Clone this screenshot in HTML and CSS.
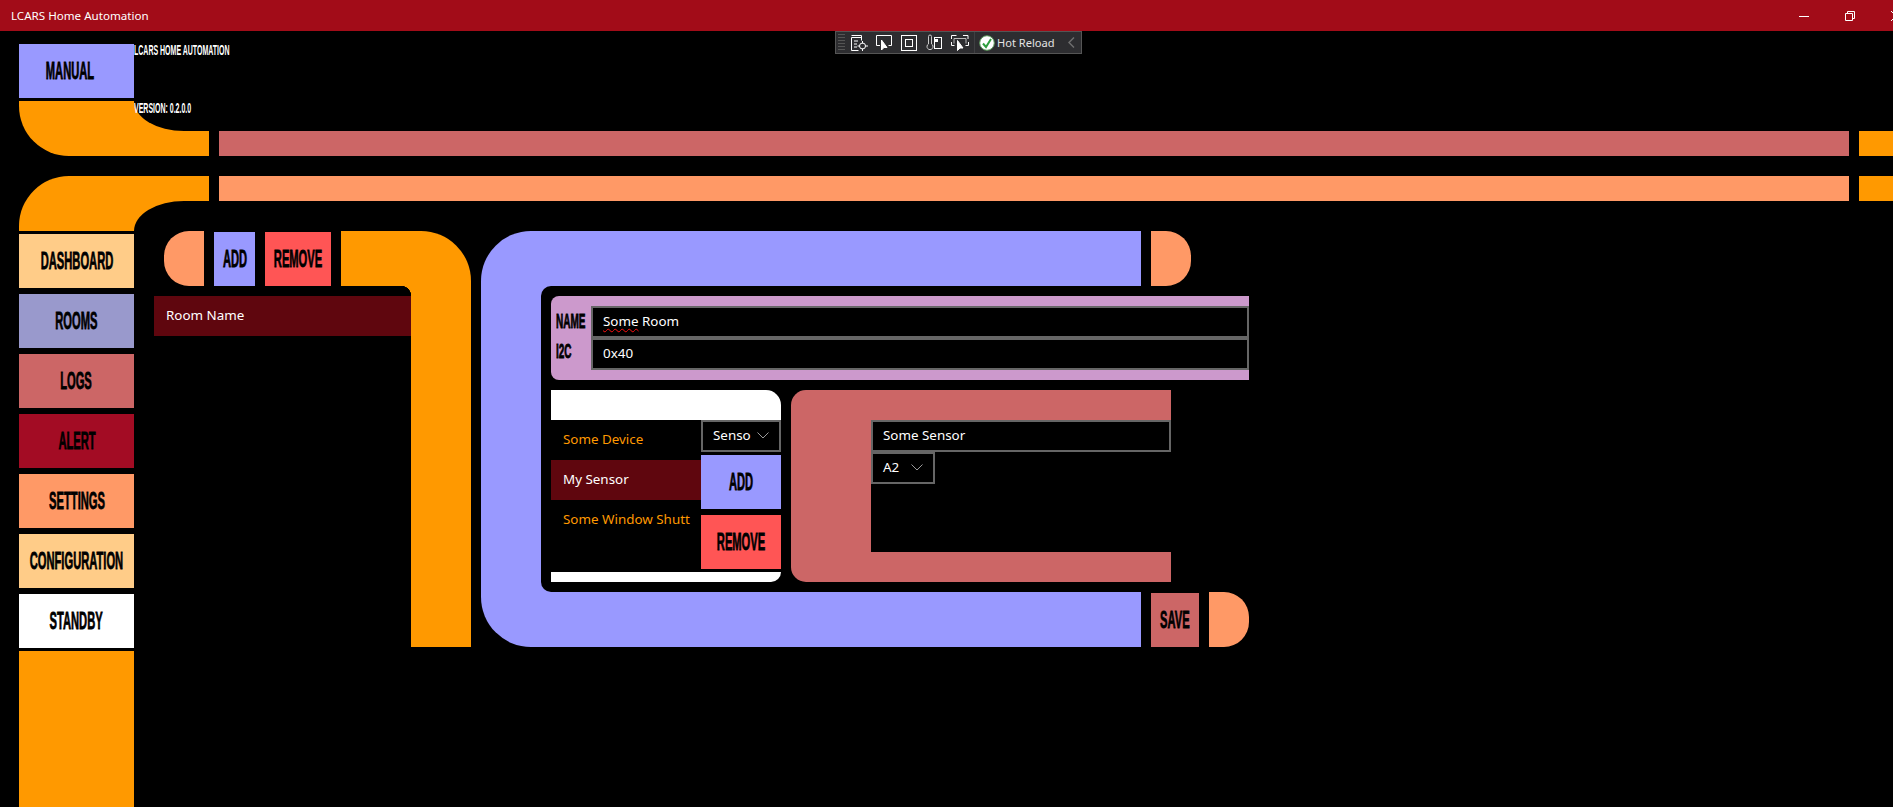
FILE: index.html
```html
<!DOCTYPE html>
<html lang="en">
<head>
  <meta charset="UTF-8" />
  <title>LCARS Home Automation</title>
  <link rel="stylesheet" href="styles.css">
</head>
<body>
  <div class="titlebar">
    <span class="app-title">LCARS Home Automation</span>
    <div class="win-controls">
      <svg width="10" height="10" viewBox="0 0 10 10"><path d="M0 5.5H10" stroke="#fff" fill="none"/></svg>
      <svg width="10" height="10" viewBox="0 0 10 10"><path d="M.5 2.5h7v7h-7zM2.5 2.5V.5h7v7h-2" stroke="#fff" fill="none"/></svg>
      <svg width="10" height="10" viewBox="0 0 10 10"><path d="M0 0L10 10M10 0L0 10" stroke="#fff" fill="none"/></svg>
    </div>
  </div>

  <div class="devbar">
    <div class="grip"></div>
    <svg class="dev-icon" width="17" height="18" viewBox="0 0 17 18" fill="none" stroke="#fff"><path d="M.5 1.5h10M.5 3.5h10"/><path d="M.5 3.5v13h7M10.5 1.5v5M3 7h4M3 10h3M3 13h3"/><circle cx="11.5" cy="12" r="3"/><path d="M11.5 7v2.500M11.500 14.500V17M6.500 12H8.500M14.500 12H17"/></svg>
    <svg class="dev-icon" width="17" height="18" viewBox="0 0 17 18" fill="none" stroke="#fff"><path d="M4 11.500H.5V1.500h15v10h-3"/><path d="M5.500 6v10l2.500-2.500 3 0z" fill="#fff"/></svg>
    <svg class="dev-icon" width="17" height="18" viewBox="0 0 17 18" fill="none" stroke="#fff"><rect x=".5" y="1.500" width="15" height="15"/><rect x="4.500" y="5.500" width="7" height="7"/></svg>
    <svg class="dev-icon" width="17" height="18" viewBox="0 0 17 18" fill="none" stroke="#fff"><path d="M2.500 10V2.500a1.500 1.500 0 0 1 3 0V10a3 3 0 1 1-3 0z" stroke="#ccc"/><rect x="8.500" y="3.500" width="7" height="11"/><rect x="9" y="5" width="3" height="3" fill="#fff" stroke="none"/></svg>
    <svg class="dev-icon" width="18" height="18" viewBox="0 0 18 18" fill="none" stroke="#fff"><path d="M.5 5V1.500h5M12 1.500h5V5M.5 8v3.500h3M17.500 8v3.500h-3"/><path d="M3 4.500h12v5M3 4.500v5" stroke="#bbb"/><path d="M6.500 6.500v10l2.500-2.500 3 0z" fill="#fff"/></svg>
    <div class="dev-sep"></div>
    <svg class="dev-check" width="16" height="16" viewBox="0 0 16 16"><circle cx="8" cy="8" r="7.300" fill="#fff" stroke="#5a9a5a"/><path d="M4 8.500l3 3.500 5-8" fill="none" stroke="#2e9e3e" stroke-width="2"/></svg>
    <span class="dev-label">Hot Reload</span>
    <svg class="dev-chev" width="7" height="11" viewBox="0 0 7 11"><path d="M6 .5L1 5.500l5 5" fill="none" stroke="#6e6e6e" stroke-width="1.500"/></svg>
  </div>

  <div class="frame">
    <div class="top">
      <button class="btn btn-lav btn-manual"><span class="cond">MANUAL</span></button>
      <div class="intro">
        <span class="tiny">LCARS HOME AUTOMATION</span>
        <span class="tiny">VERSION: 0.2.0.0</span>
      </div>
    </div>

    <div class="band band-one">
      <div class="elbow elbow-down"></div>
      <div class="bar bar-red"></div>
      <div class="bar bar-end"></div>
    </div>
    <div class="band band-two">
      <div class="elbow elbow-up"></div>
      <div class="bar bar-peach"></div>
      <div class="bar bar-end"></div>
    </div>

    <div class="main">
      <nav class="sidebar">
        <button class="btn btn-sand"><span class="cond">DASHBOARD</span></button>
        <button class="btn btn-slate"><span class="cond">ROOMS</span></button>
        <button class="btn btn-red"><span class="cond">LOGS</span></button>
        <button class="btn btn-alert"><span class="cond">ALERT</span></button>
        <button class="btn btn-peach"><span class="cond">SETTINGS</span></button>
        <button class="btn btn-sand"><span class="cond">CONFIGURATION</span></button>
        <button class="btn btn-white"><span class="cond">STANDBY</span></button>
        <div class="side-fill"></div>
      </nav>

      <section class="rooms">
        <div class="rooms-col">
          <div class="rooms-head">
            <div class="pill pill-left"></div>
            <button class="btn btn-lav btn-add-room"><span class="cond">ADD</span></button>
            <button class="btn btn-rem btn-rem-room"><span class="cond">REMOVE</span></button>
            <div class="arm-top"></div>
          </div>
          <div class="room-row">Room Name</div>
        </div>
        <div class="arm"></div>
      </section>

      <section class="editor">
        <div class="editor-top">
          <div class="lav-bar lav-top"></div>
          <div class="pill pill-right"></div>
        </div>
        <div class="editor-mid">
          <div class="editor-body">
            <div class="name-box">
              <div class="name-labels">
                <span class="label"><span class="cond cond-left">NAME</span></span>
                <span class="label"><span class="cond cond-left">I2C</span></span>
              </div>
              <div class="name-fields">
                <div class="field"><span class="typo">Some</span>&nbsp;Room</div>
                <div class="field">0x40</div>
              </div>
            </div>
            <div class="lower">
              <div class="devices">
                <div class="dev-cap dev-cap-top"></div>
                <div class="dev-mid">
                  <ul class="dev-list">
                    <li>Some Device</li>
                    <li class="active">My Sensor</li>
                    <li>Some Window Shutt</li>
                  </ul>
                  <div class="dev-actions">
                    <div class="field select"><span>Senso</span>
                      <svg width="12" height="7" viewBox="0 0 12 7"><path d="M.5 .5L6 6 11.500 .5" fill="none" stroke="#9a9a9a"/></svg>
                    </div>
                    <button class="btn btn-lav"><span class="cond">ADD</span></button>
                    <button class="btn btn-rem"><span class="cond">REMOVE</span></button>
                  </div>
                </div>
                <div class="dev-cap dev-cap-bottom"></div>
              </div>
              <div class="sensor">
                <div class="sensor-body">
                  <div class="field">Some Sensor</div>
                  <div class="field select select-small"><span>A2</span>
                    <svg width="12" height="7" viewBox="0 0 12 7"><path d="M.5 .5L6 6 11.500 .5" fill="none" stroke="#9a9a9a"/></svg>
                  </div>
                </div>
              </div>
            </div>
          </div>
        </div>
        <div class="editor-bottom">
          <div class="lav-bar lav-bottom"></div>
          <button class="btn btn-red btn-save"><span class="cond">SAVE</span></button>
          <div class="pill pill-right"></div>
        </div>
      </section>
    </div>
  </div>
</body>
</html>
```

FILE: styles.css
```css
* {
  box-sizing: border-box;
}

body {
  margin: 0;
  height: 807px;
  overflow: hidden;
  background: #000;
  color: #fff;
  font-family: "Noto Sans", "Open Sans", sans-serif;
  font-size: 13.4px;
  position: relative;
}

/* window chrome */
.titlebar {
  height: 31px;
  background: #a20c18;
  display: flex;
  align-items: center;
  padding-left: 11px;
  overflow: hidden;
}

.app-title {
  font-size: 11.6px;
  padding-bottom: 1px;
}

.win-controls {
  margin-left: auto;
  margin-right: -8px;
  display: flex;
  gap: 36px;
}

.devbar {
  position: absolute;
  top: 31px;
  left: 835px;
  width: 247px;
  height: 23px;
  background: #2d2d30;
  border: 1px solid #555;
  display: flex;
  align-items: center;
  z-index: 5;
}

.grip {
  width: 7px;
  height: 17px;
  margin-left: 2px;
  background: repeating-linear-gradient(to bottom, #555 0 1px, transparent 1px 3px);
}

.dev-icon {
  margin-left: 8px;
  flex: none;
}

.dev-icon:first-of-type {
  margin-left: 6px;
}

.dev-sep {
  width: 1px;
  height: 21px;
  background: #3f3f42;
  margin: 0 4px 0 5px;
}

.dev-label {
  margin-left: 2px;
  font-size: 11.1px;
  color: #e4e4e4;
}

.dev-chev {
  margin-left: 13px;
}

/* lcars frame */
.frame {
  padding: 13px 0 0 19px;
}

.top {
  position: relative;
  height: 54px;
  width: 115px;
}

.top .btn {
  width: 115px;
  height: 54px;
}

.top .btn-manual {
  padding-right: 13px;
}

.intro {
  position: absolute;
  top: 0;
  left: 115px;
  height: 71px;
  display: flex;
  flex-direction: column;
  justify-content: space-between;
  z-index: 2;
}

.tiny {
  display: block;
  font-family: "Liberation Sans", sans-serif;
  font-weight: bold;
  font-size: 14px;
  line-height: 13px;
  white-space: nowrap;
  transform: scaleX(0.5);
  transform-origin: left center;
}

.band {
  display: flex;
  gap: 10px;
  height: 55px;
}

.band-one {
  margin-top: 3px;
  align-items: flex-end;
}

.band-two {
  margin-top: 20px;
  align-items: flex-start;
}

.elbow {
  position: relative;
  width: 190px;
  height: 55px;
  background: #ff9900;
  flex: none;
}

.elbow::after {
  content: "";
  position: absolute;
  left: 115px;
  width: 75px;
  height: 30px;
  background: #000;
}

.elbow-down {
  border-bottom-left-radius: 50px;
}

.elbow-down::after {
  top: 0;
  border-bottom-left-radius: 50px 30px;
}

.elbow-up {
  border-top-left-radius: 50px;
}

.elbow-up::after {
  bottom: 0;
  border-top-left-radius: 50px 30px;
}

.bar {
  height: 25px;
}

.bar-red {
  width: 1630px;
  background: #cc6666;
}

.bar-peach {
  width: 1630px;
  background: #ff9966;
}

.bar-end {
  flex: 1;
  background: #ff9900;
}

/* buttons */
.btn {
  display: flex;
  align-items: center;
  justify-content: center;
  border: none;
  padding: 0;
  color: #000;
  overflow: hidden;
  cursor: pointer;
  flex: none;
}

.cond {
  display: inline-block;
  font-family: "Liberation Sans", sans-serif;
  font-weight: bold;
  font-size: 24px;
  line-height: 1;
  white-space: nowrap;
  transform: scaleX(0.465);
  -webkit-text-stroke: 0.8px #000;
}

.cond-left {
  font-size: 20px;
  transform: scaleX(0.5);
  transform-origin: left center;
}

.btn-lav { background: #9999ff; }
.btn-sand { background: #ffcc88; }
.btn-slate { background: #9999cc; }
.btn-red { background: #cc6666; }
.btn-alert { background: #a30c24; }
.btn-peach { background: #ff9966; }
.btn-white { background: #fff; }
.btn-rem { background: #ff5555; }

.main {
  display: flex;
  height: 576px;
}

.sidebar {
  width: 115px;
  display: flex;
  flex-direction: column;
  flex: none;
}

.sidebar .btn {
  height: 54px;
  margin-top: 3px;
  margin-bottom: 3px;
}

.side-fill {
  flex: 1;
  background: #ff9900;
}

/* rooms list */
.rooms {
  display: flex;
  margin-left: 20px;
  width: 317px;
  height: 416px;
  flex: none;
}

.rooms-col {
  width: 257px;
}

.rooms-head {
  display: flex;
  height: 55px;
  gap: 10px;
  padding-left: 10px;
  margin-bottom: 10px;
}

.pill {
  width: 40px;
  height: 55px;
  background: #ff9966;
  flex: none;
}

.pill-left {
  border-radius: 25px 0 0 25px;
}

.pill-right {
  border-radius: 0 25px 25px 0;
}

.btn-add-room,
.btn-rem-room {
  height: 54px;
  margin-top: 1px;
}

.btn-add-room {
  width: 41px;
}

.btn-rem-room {
  width: 66px;
}

.arm-top {
  flex: 1;
  position: relative;
  background: #ff9900;
}

.arm-top::after {
  content: "";
  position: absolute;
  top: 100%;
  right: 0;
  width: 10px;
  height: 10px;
  background: radial-gradient(circle at 0 100%, transparent 10px, #ff9900 10.5px);
}

.arm {
  width: 60px;
  background: #ff9900;
  border-top-right-radius: 50px;
}

.room-row {
  height: 40px;
  background: #5f060e;
  padding: 0 12px 2px;
  display: flex;
  align-items: center;
}

/* room editor */
.editor {
  margin-left: 10px;
  width: 768px;
  height: 416px;
  flex: none;
  display: flex;
  flex-direction: column;
}

.editor-top,
.editor-bottom {
  display: flex;
  gap: 10px;
  height: 55px;
}

.lav-bar {
  width: 660px;
  background: #9999ff;
  flex: none;
}

.lav-top {
  border-top-left-radius: 50px;
}

.lav-bottom {
  border-bottom-left-radius: 50px;
}

.btn-save {
  width: 48px;
  height: 54px;
  margin-top: 1px;
}

.editor-mid {
  height: 306px;
  background: linear-gradient(#9999ff, #9999ff) no-repeat 0 0 / 70px 100%;
}

.editor-body {
  margin-left: 60px;
  height: 100%;
  padding: 10px 0 10px 10px;
  background: #000;
  border-radius: 10px 0 0 10px;
}

.name-box {
  height: 84px;
  background: #cc99cc;
  border-radius: 8px 0 0 8px;
  display: flex;
  padding: 10px 0;
}

.name-labels {
  width: 40px;
  padding-left: 5px;
  display: flex;
  flex-direction: column;
  gap: 4px;
  flex: none;
}

.label {
  height: 26px;
  padding-top: 5px;
  color: #000;
  display: block;
}

.name-fields {
  flex: 1;
}

.field {
  height: 32px;
  border: 2px solid #666;
  background: #000;
  padding: 0 10px 2px;
  display: flex;
  align-items: center;
  white-space: nowrap;
}

.typo {
  text-decoration: underline wavy #ff1010 1.2px;
  text-underline-offset: 2px;
}

.lower {
  display: flex;
  gap: 10px;
  margin-top: 10px;
}

.devices {
  width: 230px;
  height: 192px;
  display: flex;
  flex-direction: column;
}

.dev-cap {
  background: #fff;
}

.dev-cap-top {
  height: 30px;
  border-top-right-radius: 15px;
}

.dev-cap-bottom {
  height: 10px;
  border-bottom-right-radius: 10px;
}

.dev-mid {
  flex: 1;
  display: flex;
}

.dev-list {
  list-style: none;
  margin: 0;
  padding: 0;
  width: 150px;
  color: #ff9900;
}

.dev-list li {
  height: 40px;
  padding: 0 0 2px 12px;
  display: flex;
  align-items: center;
  white-space: nowrap;
  overflow: hidden;
}

.dev-list .active {
  background: #5f060e;
  color: #fff;
}

.dev-actions {
  width: 80px;
  display: flex;
  flex-direction: column;
}

.dev-actions .btn {
  height: 54px;
  margin-top: 3px;
  margin-bottom: 3px;
}

.select {
  justify-content: space-between;
  padding: 0 10px 2px 10px;
}

.select-small {
  width: 64px;
}

.sensor {
  width: 380px;
  height: 192px;
  background: #cc6666;
  border-radius: 15px 0 0 15px;
  padding: 30px 0 30px 80px;
}

.sensor-body {
  height: 100%;
  background: #000;
}
```
